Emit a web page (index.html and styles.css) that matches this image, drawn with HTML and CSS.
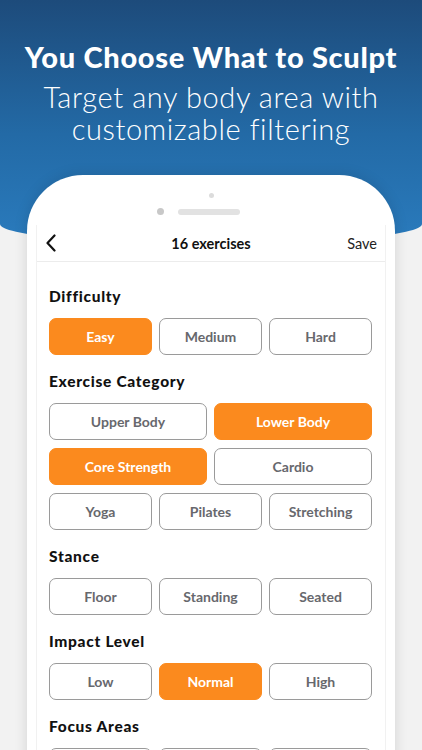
FILE: index.html
```html
<!DOCTYPE html>
<html>
<head>
<meta charset="utf-8">
<link rel="stylesheet" href="styles.css">
</head>
<body>
<div class="page">
  <header class="hero">
    <h1 class="title">You Choose What to Sculpt</h1>
    <p class="subtitle">Target any body area with<br>customizable filtering</p>
  </header>
  <div class="phone">
    <div class="sensors">
      <span class="speaker-dot"></span>
      <div class="sensor-row">
        <span class="camera"></span>
        <span class="speaker"></span>
      </div>
    </div>
    <div class="screen">
      <nav class="navbar">
        <svg class="back" width="12" height="18" viewBox="0 0 12 18"><path d="M9.5 1.5 L2.5 9 L9.5 16.5" fill="none" stroke="#111" stroke-width="2.2" stroke-linecap="round" stroke-linejoin="round"/></svg>
        <span class="nav-title">16 exercises</span>
        <span class="nav-save">Save</span>
      </nav>
      <div class="content">
        <h2 class="label">Difficulty</h2>
        <div class="grid three">
          <div class="chip on">Easy</div>
          <div class="chip">Medium</div>
          <div class="chip">Hard</div>
        </div>
        <h2 class="label">Exercise Category</h2>
        <div class="grid two">
          <div class="chip">Upper Body</div>
          <div class="chip on">Lower Body</div>
          <div class="chip on">Core Strength</div>
          <div class="chip">Cardio</div>
        </div>
        <div class="grid three tight">
          <div class="chip">Yoga</div>
          <div class="chip">Pilates</div>
          <div class="chip">Stretching</div>
        </div>
        <h2 class="label">Stance</h2>
        <div class="grid three">
          <div class="chip">Floor</div>
          <div class="chip">Standing</div>
          <div class="chip">Seated</div>
        </div>
        <h2 class="label">Impact Level</h2>
        <div class="grid three">
          <div class="chip">Low</div>
          <div class="chip on">Normal</div>
          <div class="chip">High</div>
        </div>
        <h2 class="label">Focus Areas</h2>
        <div class="grid three">
          <div class="chip"></div>
          <div class="chip"></div>
          <div class="chip"></div>
        </div>
      </div>
    </div>
  </div>
</div>
</body>
</html>
```
FILE: styles.css
```css
* { box-sizing: border-box; }
html, body { margin: 0; padding: 0; }
body {
  width: 422px;
  height: 750px;
  overflow: hidden;
  background: #f2f2f2;
  font-family: "Lato", "Noto Sans", sans-serif;
}
.page { width: 422px; height: 750px; overflow: hidden; }

.hero {
  height: 244px;
  padding-top: 40px;
  background: linear-gradient(180deg, #1d4b7b 0%, #236aa6 55%, #2a7bbd 100%);
  border-radius: 0 0 50% 50% / 0 0 20px 20px;
  color: #fff;
  text-align: center;
}
.title {
  margin: 0;
  font-family: "Lato Black", "Lato", "Noto Sans", sans-serif;
  font-size: 29px;
  line-height: 34px;
  font-weight: 900;
  letter-spacing: 0.7px;
}
.subtitle {
  margin: 7px 0 0;
  font-size: 29px;
  line-height: 32px;
  font-weight: 300;
  letter-spacing: 0.6px;
}

.phone {
  position: relative;
  margin: -69px 0 0 27px;
  width: 368px;
  height: 620px;
  background: #fff;
  border-radius: 56px 56px 0 0;
  box-shadow: 0 0 14px rgba(0, 0, 0, 0.13);
  padding: 0 9px;
}
.sensors {
  height: 50px;
  padding-top: 18px;
  display: flex;
  flex-direction: column;
  align-items: center;
}
.speaker-dot {
  width: 5px; height: 5px;
  border-radius: 50%;
  background: #dcdcdc;
}
.sensor-row {
  margin-top: 10px;
  display: flex;
  align-items: center;
  gap: 14px;
  margin-left: -26px;
}
.camera {
  width: 7px; height: 7px; border-radius: 50%;
  background: #c8c8c8;
}
.speaker {
  width: 62px; height: 6px; border-radius: 3px;
  background: #e2e2e2;
}

.screen {
  border-left: 1px solid #f1f1f1;
  border-right: 1px solid #f1f1f1;
  height: 570px;
}
.navbar {
  height: 37px;
  display: grid;
  grid-template-columns: 60px 1fr 60px;
  align-items: center;
  padding: 0 8px;
  border-bottom: 1px solid #ececec;
}
.back { display: block; }
.nav-title {
  text-align: center;
  font-size: 14.5px;
  font-weight: 700;
  color: #111;
}
.nav-save {
  text-align: right;
  font-size: 14.5px;
  color: #222;
}

.content {
  padding: 25px 13px 0 12px;
}
.label {
  margin: 17px 0 13px;
  font-family: "Lato Black", "Lato", "Noto Sans", sans-serif;
  font-size: 15.5px;
  line-height: 18px;
  font-weight: 900;
  letter-spacing: 0.7px;
  color: #111;
}
.content > .label:first-child { margin-top: 0; }
.grid {
  display: grid;
  gap: 8px 7px;
}
.grid.three { grid-template-columns: repeat(3, 1fr); }
.grid.two { grid-template-columns: repeat(2, 1fr); }
.grid.tight { margin-top: 8px; }
.chip {
  height: 37px;
  border: 1px solid #9a9a9a;
  border-radius: 7px;
  display: flex;
  align-items: center;
  justify-content: center;
  font-size: 14px;
  font-weight: 700;
  color: #67686d;
  background: #fff;
}
.chip.on {
  background: #fb8a1e;
  border-color: #fb8a1e;
  color: #fff;
}
```
